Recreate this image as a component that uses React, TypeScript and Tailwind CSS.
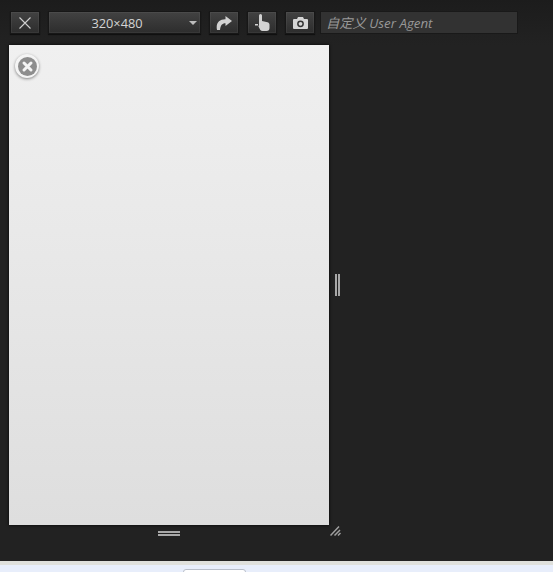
import React from "react";

const btn =
  "flex h-[23px] shrink-0 items-center justify-center border border-[#171717] bg-gradient-to-b from-[#424242] to-[#2d2d2d] shadow-[inset_0_0_0_1px_rgba(255,255,255,0.05),0_1px_1px_rgba(0,0,0,0.5)]";

export default function App() {
  return (
    <div className="flex h-[572px] w-[553px] flex-col overflow-hidden font-['Open_Sans','Noto_Sans_CJK_SC',sans-serif]">
      <div className="h-[561px] shrink-0 bg-[linear-gradient(#1c1c1c,#222222_45px)] pt-[11px]">
        <div className="flex h-[23px] items-center pl-[10px]">
          <button className={`${btn} w-[30px]`}>
            <svg width="14" height="14" viewBox="0 0 14 14" fill="none" stroke="#d0d0d0" strokeWidth="1.100">
              <path d="M1.500 1.500 12.500 12.500M12.500 1.500 1.500 12.500" />
            </svg>
          </button>
          <div className={`${btn} relative ml-2 w-[153px] pt-[2px] text-[12.800px] text-[#d4d4d4]`}>
            <span className="mr-[15px]">320×480</span>
            <span className="absolute top-[9px] right-[3px] h-0 w-0 border-x-[4px] border-t-[4px] border-x-transparent border-t-[#bdbdbd]" />
          </div>
          <button className={`${btn} ml-2 w-[30px]`}>
            <svg width="16" height="14" viewBox="0 0 16 14" fill="#d2d2d2">
              <path d="M9.500 0 16 5 9.500 10V7.200C6.500 7 4.500 9 4 14H1C-.5 7 3.500 3 9.500 3.200Z" />
            </svg>
          </button>
          <button className={`${btn} ml-2 w-[30px]`}>
            <svg width="15" height="17" viewBox="0 0 15 17" fill="#d2d2d2">
              <path d="M4 1.500a1.500 1.500 0 0 1 3 0V7l5.500 1.300c1.200.3 2 1.200 2 2.500V14a3 3 0 0 1-3 3H7.500a3 3 0 0 1-2.200-1L3.500 12.500 4 11Z" />
              <rect x="0" y="10" width="3" height="1.500" />
            </svg>
          </button>
          <button className={`${btn} ml-2 w-[30px]`}>
            <svg width="15" height="12" viewBox="0 0 15 12">
              <path fill="#d6d6d6" d="M1 2H4L5 0H10L11 2H14A1 1 0 0 1 15 3V11A1 1 0 0 1 14 12H1A1 1 0 0 1 0 11V3A1 1 0 0 1 1 2Z" />
              <circle cx="7.500" cy="6.800" r="3.400" fill="#333" />
              <circle cx="7.500" cy="6.800" r="1.900" fill="#d6d6d6" />
            </svg>
          </button>
          <div className="ml-[5px] flex h-[23px] w-[198px] items-center border border-[#191919] bg-[#323232] pt-[2px] pl-[5px] text-[13.300px] text-[#989898] italic">
            自定义 User Agent
          </div>
        </div>

        <div className="mt-[11px] ml-[9px] grid grid-cols-[320px_12px] grid-rows-[480px_12px]">
          <div className="relative bg-gradient-to-b from-[#f0f0f0] to-[#dedede] shadow-[0_0_3px_rgba(0,0,0,0.9)]">
            <div className="absolute top-[9px] left-[6px] flex h-6 w-6 items-center justify-center rounded-full bg-[#f4f4f4] shadow-[0_1px_3px_rgba(0,0,0,0.45)]">
              <svg width="19" height="19" viewBox="0 0 19 19">
                <circle cx="9.500" cy="9.500" r="9.500" fill="#8d8d8d" />
                <path d="M6 6 13 13M13 6 6 13" stroke="#f4f4f4" strokeWidth="3" strokeLinecap="round" />
              </svg>
            </div>
          </div>
          <div className="flex items-center justify-end pr-px">
            <div className="flex h-[22px] w-[5px] justify-between">
              <span className="w-[2px] bg-[#a8a8a8]" />
              <span className="w-[2px] bg-[#a8a8a8]" />
            </div>
          </div>
          <div className="flex justify-center pt-[6px]">
            <div className="flex h-[5px] w-[22px] flex-col justify-between">
              <span className="h-[2px] bg-[#a8a8a8]" />
              <span className="h-[2px] bg-[#a8a8a8]" />
            </div>
          </div>
          <div className="pl-px">
            <svg width="11" height="11" viewBox="0 0 11 11" stroke="#a0a0a0" strokeWidth="1.500">
              <path d="M0.500 10.500 9 1.500M4.500 10.500 10 5M8 10.500 10.500 8" />
            </svg>
          </div>
        </div>
      </div>
      <div className="h-[4px] shrink-0 bg-[#dfe0dc]" />
      <div className="min-h-0 flex-1 overflow-hidden bg-[#e8eefb] pt-[4px] pl-[183px]">
        <div className="h-[10px] w-[63px] rounded-t-[3px] border border-[#b9bfca] bg-white" />
      </div>
    </div>
  );
}
